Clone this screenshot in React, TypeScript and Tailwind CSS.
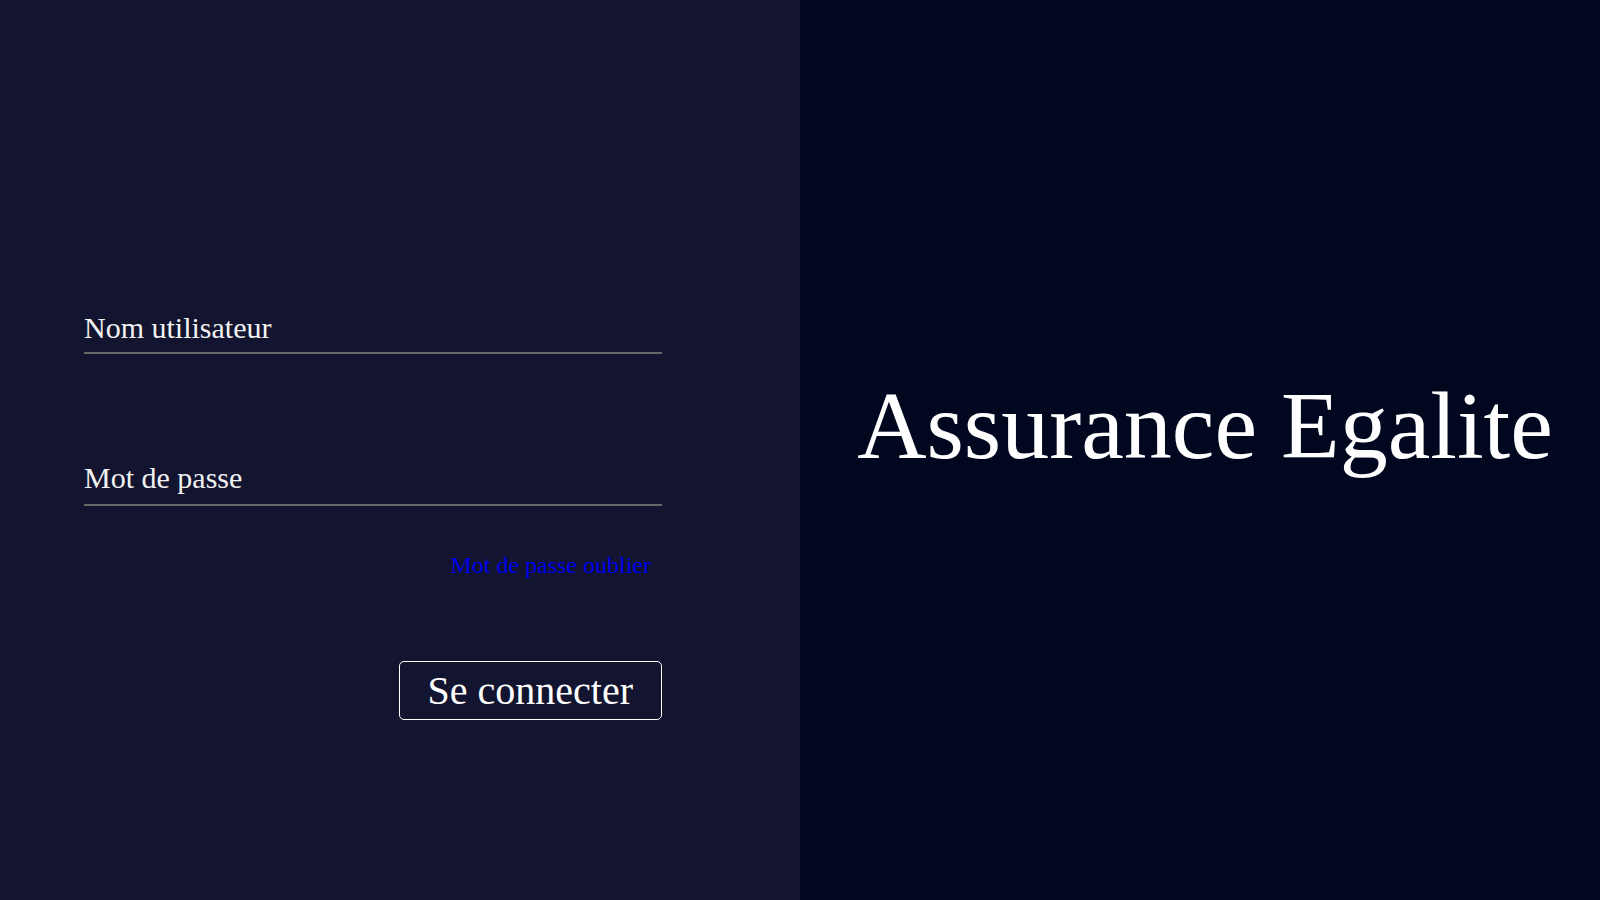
import React from "react";

const serif = "font-['Liberation_Serif','Times_New_Roman',serif]";

const LoginForm: React.FC = () => {
  return (
    <form className="flex w-[578px] flex-col" onSubmit={(e) => e.preventDefault()}>
      {/* Username */}
      <input
        type="text"
        placeholder="Nom utilisateur"
        className={`${serif} w-full border-b-2 border-[#666666] bg-transparent p-0 pb-[7px] text-[30px] leading-[34px] text-white outline-none placeholder:text-[#f2f2f2]`}
      />

      {/* Password */}
      <input
        type="password"
        placeholder="Mot de passe"
        className={`${serif} mt-[107px] w-full border-b-2 border-[#666666] bg-transparent p-0 pb-[9px] text-[30px] leading-[34px] text-white outline-none placeholder:text-[#f2f2f2]`}
      />

      <a
        href="#"
        className={`${serif} mr-[11px] mt-[45px] self-end text-[24px] leading-[28px] text-[#0000ee]`}
      >
        Mot de passe oublier
      </a>

      <button
        type="submit"
        className={`${serif} mt-[82px] h-[59px] self-end rounded-[5px] border border-white px-[28px] text-[40px] leading-none text-white`}
      >
        Se connecter
      </button>
    </form>
  );
};

export default function App() {
  return (
    <div className="flex h-[900px] w-full overflow-hidden">
      <div className="w-1/2 bg-[#131430] pl-[84px] pt-[311px]">
        <LoginForm />
      </div>
      <div className="flex w-1/2 justify-center bg-[#01071e] pl-[10px] pt-[378px]">
        <h1 className={`${serif} text-[96px] leading-none text-white`}>Assurance Egalite</h1>
      </div>
    </div>
  );
}
